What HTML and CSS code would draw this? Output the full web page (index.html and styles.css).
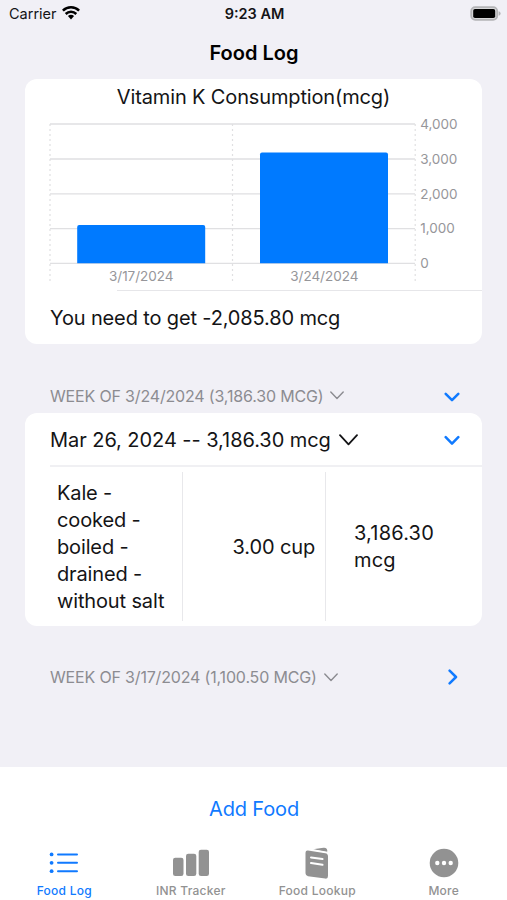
FILE: index.html
```
<!DOCTYPE html>
<html lang="en">

<head>
    <meta charset="UTF-8">
    <meta name="viewport" content="width=device-width, initial-scale=1.0">
    <title>Food Log</title>
    <link rel="stylesheet" href="styles.css">
</head>

<body>
    <div class="phone">
        <header class="status_bar">
            <div class="carrier">
                <span>Carrier</span>
                <svg class="wifi" width="18" height="14" viewBox="0 0 18 14">
                    <g fill="none" stroke="#000" stroke-width="2.5">
                        <path d="M.9 4.600A11.6 11.6 0 0 1 17.1 4.600" />
                        <path d="M3.7 8A7.500 7.500 0 0 1 14.3 8" />
                    </g>
                    <path d="M5.9 10.1A4.7 4.7 0 0 1 12.1 10.1L9 13.4Z" />
                </svg>
            </div>
            <span class="time">9:23 AM</span>
            <div class="battery">
                <svg width="31" height="15" viewBox="0 0 31 15">
                    <rect x="1.2" y="1.2" width="26" height="12.6" rx="4" fill="#d8d8da" stroke="#b4b4b7" stroke-width="1.8" />
                    <rect x="3.2" y="3" width="22" height="9" rx="1.8" />
                    <path d="M28.6 5.2q2 .6 2 2.300t-2 2.300z" fill="#b4b4b7" />
                </svg>
            </div>
        </header>
        <h1 class="title">Food Log</h1>

        <main class="content">
            <section class="card chart_card">
                <h2 class="chart_title">Vitamin K Consumption(mcg)</h2>
                <svg class="chart" width="457" height="180" viewBox="0 0 457 180">
                    <g class="grid">
                        <path d="M25 14H390M25 49H390M25 83.800H390M25 118.600H390M25 153.400H390" />
                        <path class="dashed" d="M25 14V173M207.500 14V173M390.200 14V173" />
                    </g>
                    <g class="bars">
                        <path d="M52.200 153.300V117a2 2 0 0 1 2-2H178.200a2 2 0 0 1 2 2V153.300Z" />
                        <path d="M235 153.300V44.500a2 2 0 0 1 2-2H361a2 2 0 0 1 2 2V153.300Z" />
                    </g>
                    <g class="labels">
                        <text x="395.200" y="18.700">4,000</text>
                        <text x="395.200" y="53.700">3,000</text>
                        <text x="395.200" y="88.500">2,000</text>
                        <text x="395.200" y="123.300">1,000</text>
                        <text x="395.200" y="158.200">0</text>
                        <text x="84" y="171.300">3/17/2024</text>
                        <text x="265.300" y="171.300">3/24/2024</text>
                    </g>
                </svg>
                <p class="need">You need to get -2,085.80 mcg</p>
            </section>

            <div class="week">
                <span class="week_text">WEEK OF 3/24/2024 (3,186.30 MCG)</span>
                <svg class="small_chevron" width="14" height="9" viewBox="0 0 14 9"><path d="M.8 1L7 7.600 13.200 1" /></svg>
                <svg class="toggle" width="16" height="10" viewBox="0 0 16 10"><path d="M1.700 1.800L8 8.200 14.300 1.800" /></svg>
            </div>

            <section class="card day_card">
                <div class="day">
                    <span class="day_text">Mar 26, 2024 -- 3,186.30 mcg</span>
                    <svg class="day_chevron" width="19" height="12" viewBox="0 0 19 12"><path d="M1 1.200L9.500 10.400 18 1.200" /></svg>
                    <svg class="toggle" width="16" height="10" viewBox="0 0 16 10"><path d="M1.700 2.200L8 8.600 14.300 2.200" /></svg>
                </div>
                <div class="food">
                    <div class="name">Kale -<br>cooked -<br>boiled -<br>drained -<br>without salt</div>
                    <div class="amount">3.00 cup</div>
                    <div class="vitamin">3,186.30<br>mcg</div>
                </div>
            </section>

            <div class="week last">
                <span class="week_text">WEEK OF 3/17/2024 (1,100.50 MCG)</span>
                <svg class="small_chevron" width="14" height="9" viewBox="0 0 14 9"><path d="M.8 1L7 7.600 13.200 1" /></svg>
                <svg class="toggle closed" width="10" height="16" viewBox="0 0 10 16"><path d="M1.600 1.700L8 8 1.600 14.300" /></svg>
            </div>
        </main>

        <footer class="bottom">
            <a class="add_food">Add Food</a>
            <nav class="tabs">
                <div class="tab active">
                    <svg width="30" height="34" viewBox="0 0 30 34">
                        <g fill="currentColor">
                            <circle cx="2.600" cy="9.400" r="1.900" />
                            <circle cx="2.600" cy="17.800" r="1.900" />
                            <circle cx="2.600" cy="26.200" r="1.900" />
                        </g>
                        <path d="M9 9.400H28M9 17.800H28M9 26.200H28" stroke="currentColor" stroke-width="2" stroke-linecap="round" />
                    </svg>
                    <span>Food Log</span>
                </div>
                <div class="tab tracker">
                    <svg width="36" height="34" viewBox="0 0 36 34" fill="currentColor">
                        <rect x="0" y="12.800" width="10.500" height="18.200" rx="2.300" />
                        <rect x="13" y="8.800" width="10.300" height="22.200" rx="2.300" />
                        <rect x="25.700" y="4.800" width="10.300" height="26.200" rx="2.300" />
                    </svg>
                    <span>INR Tracker</span>
                </div>
                <div class="tab lookup">
                    <svg width="24" height="34" viewBox="0 0 24 34">
                        <path d="M8 4.200L18.500 2.700Q22 2.300 22.200 5.300V7.200Z" fill="currentColor" />
                        <path d="M3 5.600L20.300 8.200Q23 8.600 23 11.300V31Q23 34 20.300 33.600L3 31.200Q.5 30.800.5 28.200V7.800Q.5 5.300 3 5.600Z" fill="currentColor" />
                        <path d="M8 4.800L22.400 7.300" stroke="#fff" stroke-width="1.200" />
                        <path d="M6 12.400L17.500 14.100M6 18.100L17.500 19.800" stroke="#fff" stroke-width="2" stroke-linecap="round" />
                    </svg>
                    <span>Food Lookup</span>
                </div>
                <div class="tab more">
                    <svg width="30" height="34" viewBox="0 0 30 34">
                        <circle cx="15" cy="18" r="14.300" fill="currentColor" />
                        <g fill="#fff">
                            <circle cx="8.300" cy="18" r="2.200" />
                            <circle cx="15" cy="18" r="2.200" />
                            <circle cx="21.700" cy="18" r="2.200" />
                        </g>
                    </svg>
                    <span>More</span>
                </div>
            </nav>
        </footer>
    </div>
</body>

</html>
```
FILE: styles.css
```
* {
    margin: 0;
    padding: 0;
    box-sizing: border-box;
}

body {
    font-family: Inter, "Liberation Sans", sans-serif;
    font-size: 20px;
    letter-spacing: -.14px;
    color: #141416;
    background: #f1f0f6;
}

svg {
    display: block;
    flex: none;
}

.phone {
    display: flex;
    flex-direction: column;
    width: 507px;
    height: 900px;
    overflow: hidden;
}

.status_bar {
    display: grid;
    grid-template-columns: 1fr auto 1fr;
    align-items: center;
    height: 27px;
    padding: 0 6px 0 9px;
    font-size: 14.5px;
    letter-spacing: 0;
}

.carrier {
    display: flex;
    align-items: center;
    gap: 5.5px;
}

.wifi {
    margin-top: -1px;
}

.time {
    margin-left: -1px;
    font-weight: 600;
}

.battery {
    display: flex;
    justify-content: flex-end;
    margin-top: -1px;
}

.title {
    height: 52px;
    padding-left: 1px;
    line-height: 52px;
    font-size: 20px;
    font-weight: 600;
    letter-spacing: 0;
    text-align: center;
    color: #000;
}

.content {
    flex: 1;
    padding: 0 25px;
}

.card {
    border-radius: 12px;
    background: #fff;
}

.chart_card {
    height: 265px;
}

.chart_title {
    height: 31px;
    line-height: 36px;
    font-size: 20px;
    font-weight: 400;
    text-align: center;
}

/* bar chart */
.grid {
    fill: none;
    stroke: #e0e0e2;
    stroke-width: 1.3;
}

.dashed {
    stroke-width: 1.2;
    stroke-dasharray: 2 3;
}

.bars {
    fill: #007aff;
}

.labels {
    font-size: 13.5px;
    letter-spacing: -.03px;
    fill: #96969a;
}

.need {
    height: 54px;
    margin-left: 92px;
    line-height: 54px;
    text-indent: -67px;
    border-top: 1px solid #e6e6e9;
}

/* week headers */
.week {
    display: flex;
    align-items: center;
    height: 69px;
    padding: 34px 22px 0 25px;
    font-size: 16px;
    letter-spacing: -.17px;
    color: #8c8c91;
}

.week .small_chevron {
    margin-left: 7px;
}

.small_chevron,
.day_chevron,
.toggle {
    fill: none;
    stroke: currentColor;
    stroke-width: 1.4;
    stroke-linecap: round;
    stroke-linejoin: round;
}

.toggle {
    margin-left: auto;
    stroke: #107aff;
    stroke-width: 2.5;
}

.week .toggle {
    margin-top: 2px;
}

.week .toggle.closed {
    margin-top: 0;
    margin-right: 2px;
}

.day_card {
    height: 213px;
}

.day {
    display: flex;
    align-items: center;
    height: 54px;
    margin-left: 25px;
    padding: 2px 22px 0 0;
    letter-spacing: -.05px;
    border-bottom: 2px solid #f0f0f3;
}

.day_chevron {
    margin-left: 8px;
    stroke-width: 1.8;
}

.food {
    display: flex;
    height: 159px;
    padding: 5px 0;
    line-height: 27px;
}

.name,
.amount {
    border-right: 1px solid #e8e8eb;
}

.name {
    width: 158px;
    padding: 7.5px 0 0 32px;
    white-space: nowrap;
}

.amount {
    width: 143px;
    padding-right: 10px;
    line-height: 150px;
    text-align: right;
}

.vitamin {
    padding: 48px 0 0 28px;
    letter-spacing: .2px;
}

.week.last {
    height: 68px;
}

/* bottom button and tabs */
.bottom {
    height: 133px;
    background: #fff;
}

.add_food {
    display: block;
    height: 78px;
    padding-left: 1px;
    line-height: 84px;
    text-align: center;
    color: #107aff;
}

.tabs {
    display: grid;
    grid-template-columns: repeat(4, 1fr);
    padding-left: 1px;
    color: #929292;
    font-size: 12px;
    font-weight: 500;
    letter-spacing: .25px;
}

.tab {
    display: flex;
    flex-direction: column;
    align-items: center;
    gap: 4px;
}

.tab.active {
    color: #107aff;
}
```
